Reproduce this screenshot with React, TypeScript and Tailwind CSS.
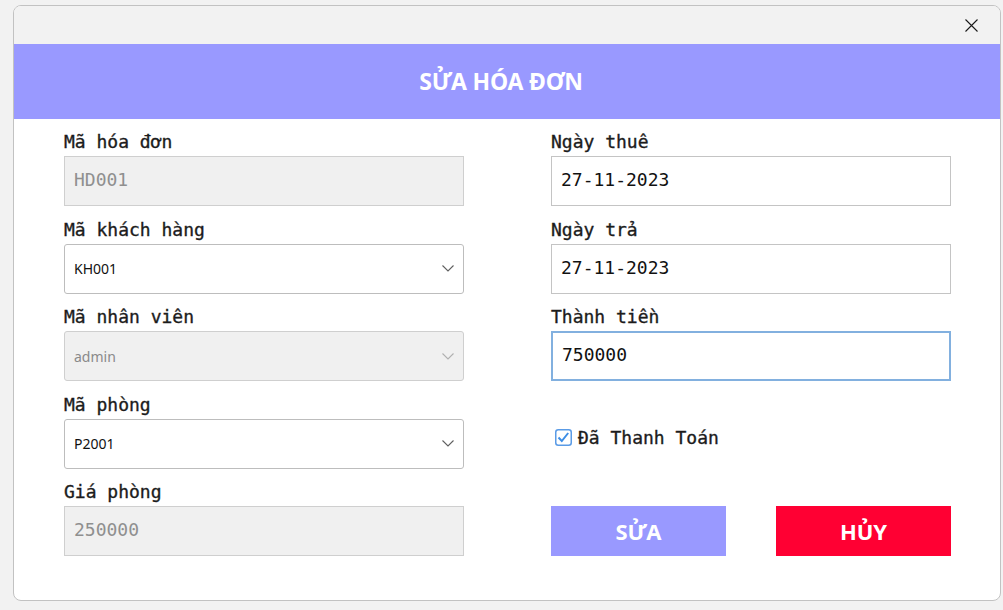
import React from "react";

const mono = { fontFamily: '"DejaVu Sans Mono", "Liberation Mono", monospace' } as React.CSSProperties;
const sans = { fontFamily: '"Noto Sans", "Open Sans", sans-serif' } as React.CSSProperties;

function Chevron({ color }: { color: string }) {
  return (
    <svg width="12" height="7" viewBox="0 0 12 7" fill="none">
      <path d="M0.5 0.5 L6 6 L11.5 0.5" stroke={color} strokeWidth="1.1" />
    </svg>
  );
}

function Label({ text }: { text: string }) {
  return (
    <div
      className="h-[26px] flex items-center pb-[2px] text-[18px] font-normal text-[#1c1c1c] leading-none [-webkit-text-stroke:0.35px_#1c1c1c]"
      style={mono}
    >
      {text}
    </div>
  );
}

function TextBox({ value, disabled, focused }: { value: string; disabled?: boolean; focused?: boolean }) {
  return (
    <div
      className={
        "h-[50px] flex items-center pl-[9px] pb-[3px] text-[18px] border " +
        (disabled
          ? "bg-[#f0f0f0] border-[#cfcfcf] text-[#8f8f8f]"
          : focused
          ? "bg-white border-[#82b0df] border-2 pl-[8px] text-[#111]"
          : "bg-white border-[#c4c4c4] text-[#111]")
      }
      style={mono}
    >
      {value}
    </div>
  );
}

function Select({ value, disabled }: { value: string; disabled?: boolean }) {
  return (
    <div
      className={
        "h-[50px] flex items-center justify-between pl-[9px] pr-[9px] rounded-[3px] border text-[14px] " +
        (disabled ? "bg-[#f0f0f0] border-[#cfcfcf] text-[#8a8a8a]" : "bg-white border-[#bdbdbd] text-[#111]")
      }
      style={sans}
    >
      <span>{value}</span>
      <Chevron color={disabled ? "#b0b0b0" : "#5f5f5f"} />
    </div>
  );
}

export default function App() {
  return (
    <div className="w-[1003px] h-[610px] bg-[#f2f2f2] pt-[5px] pl-[13px]">
      <div className="w-[988px] h-[596px] rounded-[8px] border border-[#c2c2c2] bg-white overflow-hidden flex flex-col">
        <div className="h-[38px] bg-[#f2f2f2] flex justify-end items-center pr-[22px]">
          <svg width="13" height="13" viewBox="0 0 13 13" fill="none">
            <path d="M0.5 0.5 L12.5 12.5 M12.5 0.5 L0.5 12.5" stroke="#1a1a1a" strokeWidth="1.1" />
          </svg>
        </div>
        <div className="h-[75px] bg-[#9999ff] flex items-center justify-center pr-[12px]">
          <span className="text-white text-[23px] font-bold tracking-[-0.2px]" style={sans}>
            SỬA HÓA ĐƠN
          </span>
        </div>
        <div className="flex pl-[50px] pt-[11px] gap-[87px]">
          <div className="w-[400px] flex flex-col gap-[11.5px]">
            <div>
              <Label text="Mã hóa đơn" />
              <TextBox value="HD001" disabled />
            </div>
            <div>
              <Label text="Mã khách hàng" />
              <Select value="KH001" />
            </div>
            <div>
              <Label text="Mã nhân viên" />
              <Select value="admin" disabled />
            </div>
            <div>
              <Label text="Mã phòng" />
              <Select value="P2001" />
            </div>
            <div>
              <Label text="Giá phòng" />
              <TextBox value="250000" disabled />
            </div>
          </div>
          <div className="w-[400px] flex flex-col">
            <div className="flex flex-col gap-[11.5px]">
              <div>
                <Label text="Ngày thuê" />
                <TextBox value="27-11-2023" />
              </div>
              <div>
                <Label text="Ngày trả" />
                <TextBox value="27-11-2023" />
              </div>
              <div>
                <Label text="Thành tiền" />
                <TextBox value="750000" focused />
              </div>
            </div>
            <div className="mt-[44px] h-[24px] flex items-center pl-[4px] gap-[6px]">
              <svg width="17" height="17" viewBox="0 0 17 17" fill="none">
                <rect x="0.75" y="0.75" width="15.5" height="15.5" rx="2.5" fill="white" stroke="#5a9be6" strokeWidth="1.5" />
                <path d="M3.5 8.5 L6.8 12 L13.2 4" stroke="#3d8ee6" strokeWidth="2" fill="none" />
              </svg>
              <span className="text-[18px] text-[#1c1c1c] [-webkit-text-stroke:0.35px_#1c1c1c]" style={mono}>
                Đã Thanh Toán
              </span>
            </div>
            <div className="mt-[57px] flex gap-[50px]">
              <div className="w-[175px] h-[50px] bg-[#9999ff] flex items-center justify-center text-white text-[22px] font-bold" style={sans}>
                SỬA
              </div>
              <div className="w-[175px] h-[50px] bg-[#ff0033] flex items-center justify-center text-white text-[22px] font-bold" style={sans}>
                HỦY
              </div>
            </div>
          </div>
        </div>
      </div>
    </div>
  );
}
